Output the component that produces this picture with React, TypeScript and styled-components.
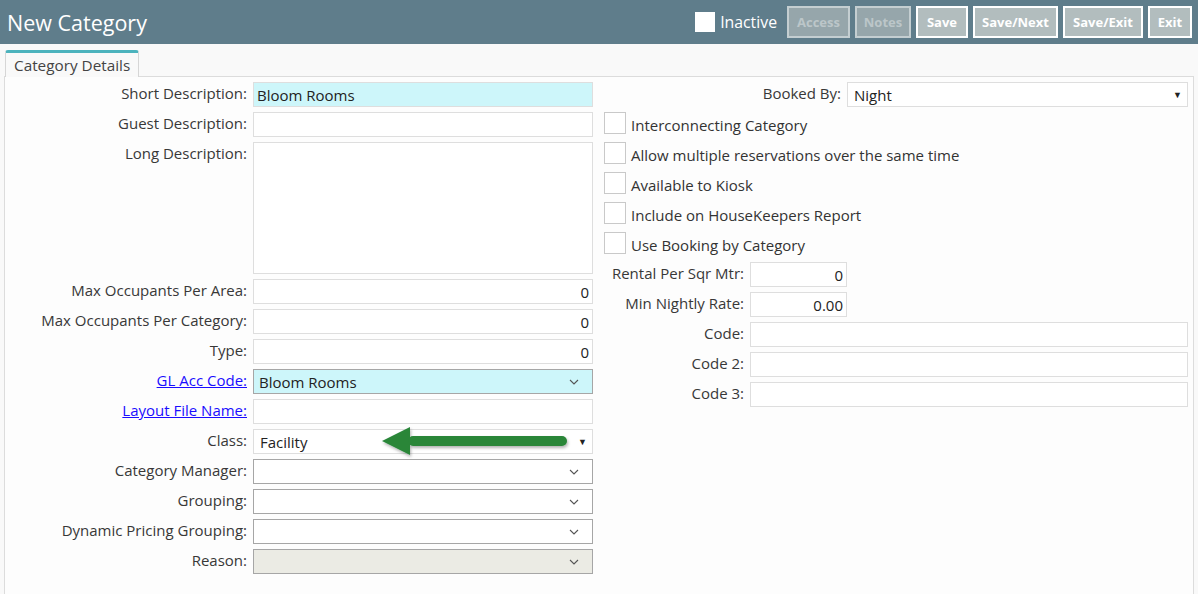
import React from 'react';
import styled, { createGlobalStyle, css } from 'styled-components';

const GlobalStyle = createGlobalStyle`
  html, body {
    margin: 0;
    padding: 0;
    background: #f9f9f9;
    font-family: 'Open Sans', 'Noto Sans', Arial, sans-serif;
    color: #333;
  }
  * { box-sizing: border-box; }
`;

const Header = styled.div`
  display: flex;
  align-items: center;
  justify-content: space-between;
  height: 44px;
  padding: 0 6px 0 7px;
  background: #5f7d8b;
`;

const Title = styled.h1`
  margin: 0;
  font-size: 21.5px;
  font-weight: 400;
  color: #fff;
`;

const Actions = styled.div`
  display: flex;
  align-items: center;
  gap: 5px;
`;

const InactiveToggle = styled.label`
  display: flex;
  align-items: center;
  gap: 5px;
  margin-right: 5px;
  font-size: 15.8px;
  color: #fff;
`;

const WhiteBox = styled.span`
  width: 20px;
  height: 20px;
  background: #fff;
`;

const HeaderButton = styled.button<{ $disabled?: boolean; $w: number }>`
  width: ${(p) => p.$w}px;
  height: 32px;
  padding: 0;
  font-family: inherit;
  font-size: 13px;
  font-weight: 700;
  border: 2px solid #fff;
  background: #b2bdbe;
  color: #fff;
  ${(p) =>
    p.$disabled &&
    css`
      border-color: #c4ced1;
      background: #96a6ab;
      color: #bcc6c9;
    `}
`;

const TabStrip = styled.div`
  display: flex;
  padding: 6px 0 0 5px;
`;

const Tab = styled.div`
  height: 27px;
  padding: 0 8px;
  margin-bottom: -1px;
  display: flex;
  align-items: center;
  font-size: 15.3px;
  color: #444;
  background: #f9f9f9;
  border: 1px solid #d6d6d6;
  border-top: 3px solid #4cb3bd;
  border-bottom: none;
  border-radius: 3px 3px 0 0;
  position: relative;
  z-index: 1;
`;

const Panel = styled.div`
  display: flex;
  margin: 0 4px;
  padding: 5px 5px 20px 0;
  min-height: 530px;
  background: #fdfdfd;
  border: 1px solid #dcdcdc;
`;

const LeftColumn = styled.div`
  width: 588px;
  display: flex;
  flex-direction: column;
  gap: 5px;
`;

const RightColumn = styled.div`
  flex: 1;
  margin-left: 5px;
  display: flex;
  flex-direction: column;
  gap: 5px;
`;

const Row = styled.div<{ $label: number }>`
  display: grid;
  grid-template-columns: ${(p) => p.$label}px 1fr;
  column-gap: 6px;
  align-items: start;
`;

const Label = styled.div<{ $link?: boolean }>`
  text-align: right;
  font-size: 15px;
  line-height: 22px;
  color: #383838;
  white-space: nowrap;
  ${(p) =>
    p.$link &&
    css`
      color: #1a0dff;
      text-decoration: underline;
    `}
`;

const Field = styled.div<{
  $height?: number;
  $width?: number;
  $tint?: 'cyan' | 'grey';
  $dark?: boolean;
  $align?: 'left' | 'right';
}>`
  position: relative;
  height: ${(p) => p.$height ?? 25}px;
  width: ${(p) => (p.$width ? `${p.$width}px` : 'auto')};
  display: flex;
  align-items: center;
  justify-content: ${(p) => (p.$align === 'right' ? 'flex-end' : 'space-between')};
  padding: 0 3px;
  font-size: 15px;
  color: #222;
  background: ${(p) => (p.$tint === 'cyan' ? '#cdf6fa' : p.$tint === 'grey' ? '#ebebe4' : '#fff')};
  border: 1px solid ${(p) => (p.$dark ? '#a6a6a6' : '#dedede')};
`;

const SelectText = styled.span<{ $inset?: number }>`
  padding-left: ${(p) => p.$inset ?? 2}px;
`;

const Triangle = styled.span`
  font-size: 9px;
  color: #222;
  margin-right: 2px;
`;

const Chevron = () => (
  <svg width="10" height="6" viewBox="0 0 10 6" style={{ marginRight: 10 }}>
    <polyline points="1,1 5,5 9,1" fill="none" stroke="#555" strokeWidth="1.1" />
  </svg>
);

const CheckRow = styled.label`
  display: flex;
  align-items: center;
  gap: 5px;
  height: 25px;
  padding-left: 6px;
  font-size: 15px;
  color: #333;
`;

const CheckBox = styled.span`
  width: 22px;
  height: 22px;
  margin-top: -3px;
  background: #fff;
  border: 1px solid #c9c9c9;
`;

const Arrow = styled.svg`
  position: absolute;
  left: 127px;
  top: -3px;
`;

const GreenArrow = () => (
  <Arrow width="190" height="34" viewBox="0 0 190 34">
    <defs>
      <filter id="sh" x="-10%" y="-30%" width="120%" height="180%">
        <feDropShadow dx="1" dy="2" stdDeviation="1.5" floodColor="#000" floodOpacity="0.3" />
      </filter>
    </defs>
    <g filter="url(#sh)" fill="#2a8639">
      <polygon points="1,14 29,0 29,28" />
      <rect x="27" y="9" width="159" height="10" rx="5" />
    </g>
  </Arrow>
);

const Combo = ({ value, tint }: { value?: string; tint?: 'cyan' | 'grey' }) => (
  <Field $dark $tint={tint}>
    <SelectText>{value ?? ''}</SelectText>
    <Chevron />
  </Field>
);

const App: React.FC = () => {
  const checks = [
    'Interconnecting Category',
    'Allow multiple reservations over the same time',
    'Available to Kiosk',
    'Include on HouseKeepers Report',
    'Use Booking by Category',
  ];

  return (
    <>
      <GlobalStyle />
      <Header>
        <Title>New Category</Title>
        <Actions>
          <InactiveToggle>
            <WhiteBox />
            Inactive
          </InactiveToggle>
          <HeaderButton $disabled $w={63}>Access</HeaderButton>
          <HeaderButton $disabled $w={56}>Notes</HeaderButton>
          <HeaderButton $w={52}>Save</HeaderButton>
          <HeaderButton $w={85}>Save/Next</HeaderButton>
          <HeaderButton $w={80}>Save/Exit</HeaderButton>
          <HeaderButton $w={44}>Exit</HeaderButton>
        </Actions>
      </Header>

      <TabStrip>
        <Tab>Category Details</Tab>
      </TabStrip>

      <Panel>
        <LeftColumn>
          <Row $label={242}>
            <Label>Short Description:</Label>
            <Field $tint="cyan">Bloom Rooms</Field>
          </Row>
          <Row $label={242}>
            <Label>Guest Description:</Label>
            <Field />
          </Row>
          <Row $label={242}>
            <Label>Long Description:</Label>
            <Field $height={132} />
          </Row>
          <Row $label={242}>
            <Label>Max Occupants Per Area:</Label>
            <Field $align="right">0</Field>
          </Row>
          <Row $label={242}>
            <Label>Max Occupants Per Category:</Label>
            <Field $align="right">0</Field>
          </Row>
          <Row $label={242}>
            <Label>Type:</Label>
            <Field $align="right">0</Field>
          </Row>
          <Row $label={242}>
            <Label $link>GL Acc Code:</Label>
            <Combo value="Bloom Rooms" tint="cyan" />
          </Row>
          <Row $label={242}>
            <Label $link>Layout File Name:</Label>
            <Field />
          </Row>
          <Row $label={242}>
            <Label>Class:</Label>
            <Field>
              <SelectText $inset={3}>Facility</SelectText>
              <Triangle>▼</Triangle>
              <GreenArrow />
            </Field>
          </Row>
          <Row $label={242}>
            <Label>Category Manager:</Label>
            <Combo />
          </Row>
          <Row $label={242}>
            <Label>Grouping:</Label>
            <Combo />
          </Row>
          <Row $label={242}>
            <Label>Dynamic Pricing Grouping:</Label>
            <Combo />
          </Row>
          <Row $label={242}>
            <Label>Reason:</Label>
            <Combo tint="grey" />
          </Row>
        </LeftColumn>

        <RightColumn>
          <Row $label={243}>
            <Label>Booked By:</Label>
            <Field>
              <SelectText $inset={3}>Night</SelectText>
              <Triangle>▼</Triangle>
            </Field>
          </Row>
          {checks.map((c) => (
            <CheckRow key={c}>
              <CheckBox />
              {c}
            </CheckRow>
          ))}
          <Row $label={146}>
            <Label>Rental Per Sqr Mtr:</Label>
            <Field $width={97} $align="right">0</Field>
          </Row>
          <Row $label={146}>
            <Label>Min Nightly Rate:</Label>
            <Field $width={97} $align="right">0.00</Field>
          </Row>
          <Row $label={146}>
            <Label>Code:</Label>
            <Field />
          </Row>
          <Row $label={146}>
            <Label>Code 2:</Label>
            <Field />
          </Row>
          <Row $label={146}>
            <Label>Code 3:</Label>
            <Field />
          </Row>
        </RightColumn>
      </Panel>
    </>
  );
};

export default App;
